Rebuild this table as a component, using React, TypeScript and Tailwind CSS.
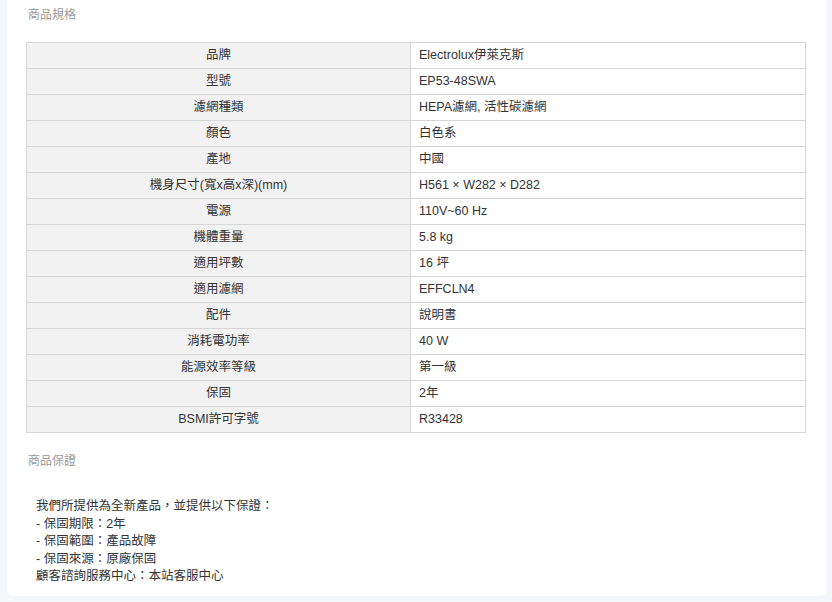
const SPECS: [string, string][] = [
  ["品牌", "Electrolux伊萊克斯"],
  ["型號", "EP53-48SWA"],
  ["濾網種類", "HEPA濾網, 活性碳濾網"],
  ["顏色", "白色系"],
  ["產地", "中國"],
  ["機身尺寸(寬x高x深)(mm)", "H561 × W282 × D282"],
  ["電源", "110V~60 Hz"],
  ["機體重量", "5.8 kg"],
  ["適用坪數", "16 坪"],
  ["適用濾網", "EFFCLN4"],
  ["配件", "說明書"],
  ["消耗電功率", "40 W"],
  ["能源效率等級", "第一級"],
  ["保固", "2年"],
  ["BSMI許可字號", "R33428"],
];

const font = { fontFamily: '"Liberation Sans", "Noto Sans CJK TC", sans-serif' };

export default function App() {
  return (
    <div className="min-h-[602px] bg-[#f4f6f9] pl-[7px] pr-[6px]" style={font}>
      <div className="w-[819px] rounded-b-md bg-white px-[19px] pb-[10px] text-[12.5px] text-[#333]">
        <div className="pt-[8px] pl-[2px] text-[12px] leading-[14px] text-[#999]">商品規格</div>

        <table className="mt-[20px] w-[780px] border-collapse border border-[#cfcfcf]">
          <tbody>
            {SPECS.map(([k, v]) => (
              <tr key={k} className="h-[26px]">
                <td className="w-[384px] border border-[#d6d6d6] bg-[#f2f2f2] p-0 text-center align-middle leading-[25px]">
                  {k}
                </td>
                <td className="border border-[#d6d6d6] p-0 pl-[8px] align-middle leading-[25px]">{v}</td>
              </tr>
            ))}
          </tbody>
        </table>

        <div className="mt-[21px] pl-[2px] text-[12px] leading-[14px] text-[#999]">商品保證</div>

        <div className="mt-[30px] pl-[10px] text-[12.5px] leading-[17.5px] text-[#333]">
          <div>我們所提供為全新產品，並提供以下保證：</div>
          <div>- 保固期限：2年</div>
          <div>- 保固範圍：產品故障</div>
          <div>- 保固來源：原廠保固</div>
          <div>顧客諮詢服務中心：本站客服中心</div>
        </div>
      </div>
    </div>
  );
}
